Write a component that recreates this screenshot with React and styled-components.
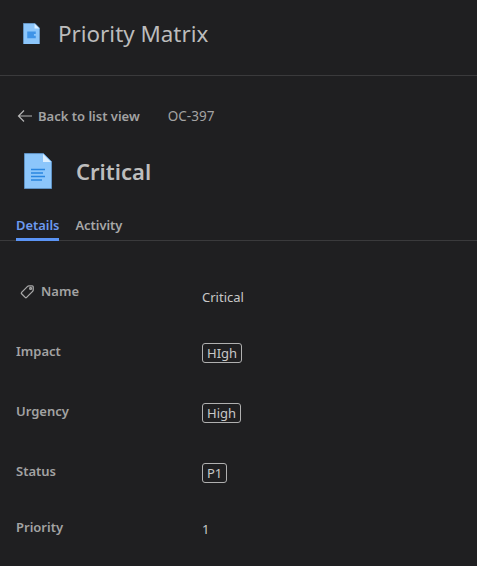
import React from "react";
import styled, { createGlobalStyle } from "styled-components";

const GlobalStyle = createGlobalStyle`
  html, body {
    margin: 0;
    background: #1f1f21;
    font-family: "Noto Sans", "Open Sans", sans-serif;
  }
  * { box-sizing: border-box; }
`;

const fields = [
  { label: "Name", value: "Critical", height: 60, icon: true },
  { label: "Impact", value: "HIgh", tag: true, height: 60 },
  { label: "Urgency", value: "High", tag: true, height: 60 },
  { label: "Status", value: "P1", tag: true, height: 56 },
  { label: "Priority", value: "1", number: true, height: 56 },
];

function DocIcon({ size, lines }) {
  return (
    <svg width={size} height={size * 1.29} viewBox="0 0 28 36" fill="none">
      <path d="M.5.5h19l8 8v27H.5z" fill="#8cc6fb" stroke="#5f92c4" strokeWidth="1" />
      <path d="M19 1l8 8h-8z" fill="#dcefff" />
      {lines ? (
        <path d="M7 16.5h14M7 20h12M7 23.5h14M7 27h11" stroke="#2a86e0" strokeWidth="1.5" />
      ) : (
        <path d="M7 14h14v4h-3v3h3v4H7z" fill="#3f94e8" />
      )}
    </svg>
  );
}

function TagIcon() {
  return (
    <svg width="16" height="16" viewBox="0 0 16 16" fill="none" stroke="#a8a8a8" strokeWidth="1.3">
      <path d="M1.6 9.4 7.6 3.4a2 2 0 0 1 1.4-.6h3.2a1 1 0 0 1 1 1v3.2a2 2 0 0 1-.6 1.4l-6 6a1 1 0 0 1-1.4 0l-3.6-3.6a1 1 0 0 1 0-1.4z" />
      <circle cx="10.6" cy="5.4" r=".9" />
    </svg>
  );
}

function BackArrow() {
  return (
    <svg width="16" height="14" viewBox="0 0 16 14" fill="none" stroke="#b4b4b4" strokeWidth="1.2">
      <path d="M15 7H1.5M7 1.5 1.5 7 7 12.5" />
    </svg>
  );
}

export default function App() {
  return (
    <Page>
      <GlobalStyle />
      <Header>
        <DocIcon size={17} />
        <AppTitle>Priority Matrix</AppTitle>
      </Header>
      <BackRow>
        <BackLink>
          <BackArrow />
          Back to list view
        </BackLink>
        <TicketId>OC-397</TicketId>
      </BackRow>
      <TitleRow>
        <DocIcon size={28} lines />
        <Title>Critical</Title>
      </TitleRow>
      <Tabs>
        <Tab $active>Details</Tab>
        <Tab>Activity</Tab>
      </Tabs>
      <Fields>
        {fields.map((f) => (
          <Row key={f.label} $height={f.height}>
            <Label $icon={f.icon}>
              {f.icon && <TagIcon />}
              {f.label}
            </Label>
            {f.tag ? <Tag>{f.value}</Tag> : <Value $number={f.number}>{f.value}</Value>}
          </Row>
        ))}
      </Fields>
    </Page>
  );
}

const Page = styled.div`
  width: 477px;
  height: 566px;
  overflow: hidden;
  background: #1f1f21;
`;

const Header = styled.header`
  display: flex;
  align-items: center;
  gap: 18px;
  height: 76px;
  padding: 0 0 8px 23px;
  border-bottom: 1px solid #3a3a3c;
`;

const AppTitle = styled.h1`
  margin: 0;
  font-size: 22.4px;
  font-weight: 400;
  color: #bcbcbc;
`;

const BackRow = styled.div`
  display: flex;
  align-items: center;
  gap: 28px;
  height: 20px;
  margin-top: 30px;
  padding-left: 17px;
`;

const BackLink = styled.a`
  display: flex;
  align-items: center;
  gap: 5px;
  font-size: 13px;
  font-weight: 600;
  color: #a3a3a3;
`;

const TicketId = styled.span`
  font-size: 13.5px;
  color: #a3a3a3;
`;

const TitleRow = styled.div`
  display: flex;
  align-items: center;
  gap: 24px;
  height: 38px;
  margin-top: 26px;
  padding-left: 24px;
`;

const Title = styled.h2`
  margin: 0;
  font-size: 22px;
  font-weight: 600;
  color: #bdbdbd;
`;

const Tabs = styled.nav`
  display: flex;
  gap: 16px;
  height: 31px;
  margin-top: 20px;
  padding-left: 16px;
  border-bottom: 1px solid #3a3a3c;
`;

const Tab = styled.div`
  height: 31px;
  padding-top: 6px;
  font-size: 12.9px;
  font-weight: 600;
  color: ${(p) => (p.$active ? "#6d9bf1" : "#a8a8a8")};
  border-bottom: ${(p) => (p.$active ? "3px solid #5b94f5" : "none")};
`;

const Fields = styled.div`
  margin-top: 41px;
  padding-left: 16px;
`;

const Row = styled.div`
  display: grid;
  grid-template-columns: 186px 1fr;
  align-items: start;
  height: ${(p) => p.$height}px;
`;

const Label = styled.div`
  display: flex;
  align-items: center;
  gap: 5px;
  padding-left: ${(p) => (p.$icon ? "4px" : "0")};
  font-size: 13px;
  font-weight: 600;
  color: #a3a3a3;
`;

const Value = styled.div`
  padding-top: ${(p) => (p.$number ? "2px" : "6px")};
  font-size: 13px;
  color: #c8c8c8;
`;

const Tag = styled.span`
  justify-self: start;
  margin-top: 1px;
  padding: 0 4px;
  height: 20px;
  line-height: 18px;
  border: 1px solid #b0b0b0;
  border-radius: 3px;
  font-size: 13px;
  color: #c8c8c8;
`;
